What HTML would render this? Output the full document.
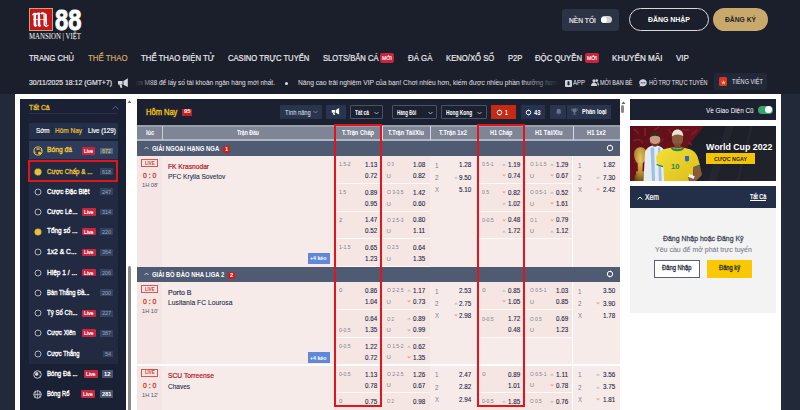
<!DOCTYPE html>
<html><head><meta charset="utf-8"><style>
html,body{margin:0;padding:0;}
body{width:800px;height:410px;overflow:hidden;position:relative;background:#1b1f2b;font-family:"Liberation Sans",sans-serif;}
.b{position:absolute;}
.t{position:absolute;white-space:nowrap;transform-origin:0 0;}

</style></head><body>
<div class="b" style="left:0px;top:0px;width:800px;height:94px;background:#1b1f2b;"></div>
<div class="b" style="left:0px;top:94px;width:800px;height:316px;background:#222939;"></div>
<div class="b" style="left:15px;top:94px;width:766px;height:316px;background:#ffffff;"></div>
<div class="b" style="left:29px;top:8px;width:24px;height:23px;background:#c4161c;border:1px solid #c9a56a;box-sizing:border-box;"></div>
<svg style="position:absolute;left:29px;top:8px" width="24" height="23" viewBox="0 0 24 23"><g fill="#ffffff"><path d="M3.2 6.5c1-1.6 2.4-2.2 3.8-1.6l.2 11.6 1.2 1.6-2.4 1-1.4-1.6V7.2c-.5-.3-1-.2-1.4.4z"/><path d="M7 5.4c1.2-1 2.6-1.2 4-.6l.3 11.8 1 1.4-2.2.9-1.3-1.5V6.6L7 7z"/><path d="M11 5.2c1.4-1.1 3-1.3 4.6-.4l.4 11.6 1.8 1.3 1.6-.9.2 1-2.6 1.4-2.4-1.6-.2-11.6-1.8.6z"/><path d="M15.4 4.8l2.4 1.4.3 10.2-1.5.4z"/><path d="M4 11h13v1H4z" opacity=".6"/></g></svg>
<div class="t" style="left:55.00px;top:5.12px;font-size:29.5px;line-height:29.5px;color:#ffffff;font-weight:700;transform:scaleX(0.807);-webkit-text-stroke:0.9px #fff;">88</div>
<div class="t" style="left:29.00px;top:32.27px;font-size:8.5px;line-height:8.5px;color:#ffffff;font-family:'Liberation Serif',serif;transform:scaleX(0.802);">MANSION | VIỆT</div>
<div class="b" style="left:562px;top:9px;width:56.5px;height:22px;background:#2c3345;border-radius:3px;"></div>
<div class="t" style="left:569.00px;top:16.54px;font-size:7.6px;line-height:7.6px;color:#f2f2f2;transform:scaleX(0.880);-webkit-text-stroke:0.15px #fff;">NỀN TỐI</div>
<div class="b" style="left:600.7px;top:16.3px;width:11.5px;height:6.9px;background:#d2d2d6;border-radius:3.5px;"></div>
<div class="b" style="left:600.9px;top:16.5px;width:6.4px;height:6.5px;background:#ffffff;border-radius:3.3px;"></div>
<div class="b" style="left:628.5px;top:8px;width:80px;height:23px;border:1px solid #d8d8d8;box-sizing:border-box;border-radius:12px;"></div>
<div class="t" style="left:647.90px;top:15.97px;font-size:7.8px;line-height:7.8px;color:#ffffff;font-weight:700;transform:scaleX(0.889);">ĐĂNG NHẬP</div>
<div class="b" style="left:712.5px;top:8px;width:55.5px;height:23px;background:#c9a86c;border-radius:12px;"></div>
<div class="t" style="left:724.50px;top:15.97px;font-size:7.8px;line-height:7.8px;color:#1b1f2b;font-weight:700;transform:scaleX(0.862);">ĐĂNG KÝ</div>
<div class="t" style="left:28.90px;top:53.52px;font-size:8.8px;line-height:8.8px;color:#e9e9ee;transform:scaleX(0.859);-webkit-text-stroke:0.2px currentColor;">TRANG CHỦ</div>
<div class="t" style="left:88.00px;top:53.52px;font-size:8.8px;line-height:8.8px;color:#d6a96c;transform:scaleX(0.891);-webkit-text-stroke:0.2px currentColor;">THỂ THAO</div>
<div class="t" style="left:141.00px;top:53.52px;font-size:8.8px;line-height:8.8px;color:#e9e9ee;transform:scaleX(0.886);-webkit-text-stroke:0.2px currentColor;">THỂ THAO ĐIỆN TỬ</div>
<div class="t" style="left:228.00px;top:53.52px;font-size:8.8px;line-height:8.8px;color:#e9e9ee;transform:scaleX(0.868);-webkit-text-stroke:0.2px currentColor;">CASINO TRỰC TUYẾN</div>
<div class="t" style="left:322.50px;top:53.52px;font-size:8.8px;line-height:8.8px;color:#e9e9ee;transform:scaleX(0.867);-webkit-text-stroke:0.2px currentColor;">SLOTS/BẮN CÁ</div>
<div class="t" style="left:407.50px;top:53.52px;font-size:8.8px;line-height:8.8px;color:#e9e9ee;transform:scaleX(0.895);-webkit-text-stroke:0.2px currentColor;">ĐÁ GÀ</div>
<div class="t" style="left:445.50px;top:53.52px;font-size:8.8px;line-height:8.8px;color:#e9e9ee;transform:scaleX(0.874);-webkit-text-stroke:0.2px currentColor;">KENO/XỔ SỐ</div>
<div class="t" style="left:507.50px;top:53.52px;font-size:8.8px;line-height:8.8px;color:#e9e9ee;transform:scaleX(0.871);-webkit-text-stroke:0.2px currentColor;">P2P</div>
<div class="t" style="left:535.00px;top:53.52px;font-size:8.8px;line-height:8.8px;color:#e9e9ee;transform:scaleX(0.882);-webkit-text-stroke:0.2px currentColor;">ĐỘC QUYỀN</div>
<div class="t" style="left:612.00px;top:53.52px;font-size:8.8px;line-height:8.8px;color:#e9e9ee;transform:scaleX(0.922);-webkit-text-stroke:0.2px currentColor;">KHUYẾN MÃI</div>
<div class="t" style="left:676.00px;top:53.52px;font-size:8.8px;line-height:8.8px;color:#e9e9ee;transform:scaleX(0.916);-webkit-text-stroke:0.2px currentColor;">VIP</div>
<div class="b" style="left:380px;top:53px;width:14.3px;height:10px;background:#c8243c;border-radius:2px;"></div>
<div class="t" style="left:382.25px;top:55.93px;font-size:5.5px;line-height:5.5px;color:#ffffff;transform:scaleX(0.924);-webkit-text-stroke:0.15px #fff;">MỚI</div>
<div class="b" style="left:584.5px;top:53px;width:14.3px;height:10px;background:#c8243c;border-radius:2px;"></div>
<div class="t" style="left:586.75px;top:55.93px;font-size:5.5px;line-height:5.5px;color:#ffffff;transform:scaleX(0.924);-webkit-text-stroke:0.15px #fff;">MỚI</div>
<div class="t" style="left:28.90px;top:79.31px;font-size:7.4px;line-height:7.4px;color:#ececf0;transform:scaleX(0.935);-webkit-text-stroke:0.15px currentColor;">30/11/2025 18:12 (GMT+7)</div>
<svg style="position:absolute;left:117px;top:77px" width="12" height="12" viewBox="0 0 12 12"><path d="M1 4h4.6v3.6H1z" fill="#d4d7de"/><path d="M2.4 7.6h2.2l.7 3.2H3.4z" fill="#d4d7de"/><path d="M6.4 3.9L10.8 1.2v8.8L6.4 7.7z" fill="#d4d7de"/></svg>
<div class="t" style="left:133.70px;top:79.01px;font-size:7.4px;line-height:7.4px;color:#e0e0e6;transform:scaleX(0.880);">iền M88 để lấy số tài khoản ngân hàng mới nhất.</div>
<div class="b" style="left:130px;top:74px;width:26px;height:16px;background:linear-gradient(90deg,#1b1f2b 20%,rgba(27,31,43,0));"></div>
<div class="b" style="left:285px;top:81.5px;width:3px;height:3px;background:#e0e0e6;border-radius:2px;"></div>
<div class="t" style="left:298.00px;top:79.01px;font-size:7.4px;line-height:7.4px;color:#e0e0e6;transform:scaleX(0.902);">Nâng cao trải nghiệm VIP của bạn! Chơi nhiều hơn, kiếm được nhiều phần thưởng hơn và</div>
<div class="b" style="left:520px;top:74px;width:42px;height:16px;background:linear-gradient(90deg,rgba(27,31,43,0),#1b1f2b 95%);"></div>
<div class="b" style="left:562px;top:74px;width:12px;height:16px;background:#1b1f2b;"></div>
<svg style="position:absolute;left:565px;top:79.5px" width="7" height="7" viewBox="0 0 7 7"><rect x="0" y="0" width="7" height="7" rx="1" fill="#cfd2da"/><rect x="2.6" y="1.3" width="1.8" height="3" fill="#1b1f2b"/><path d="M1.8 3.8h3.4L3.5 5.6z" fill="#1b1f2b"/></svg>
<div class="t" style="left:573.20px;top:79.15px;font-size:7px;line-height:7px;color:#e8e8ee;transform:scaleX(0.856);">APP</div>
<svg style="position:absolute;left:591px;top:79px" width="8" height="7" viewBox="0 0 8 7"><circle cx="3" cy="1.8" r="1.6" fill="#cfd2da"/><path d="M0 7c0-2.4 1.2-3.6 3-3.6S6 4.6 6 7z" fill="#cfd2da"/><circle cx="5.8" cy="1.6" r="1.3" fill="#cfd2da"/><path d="M6.2 3.3c1.2.2 1.8 1.3 1.8 3.2H6.8c0-1.3-.3-2.3-.9-2.9z" fill="#cfd2da"/></svg>
<div class="t" style="left:600.40px;top:79.15px;font-size:7px;line-height:7px;color:#e8e8ee;transform:scaleX(0.785);">MỜI BẠN BÈ</div>
<svg style="position:absolute;left:639px;top:79px" width="8" height="8" viewBox="0 0 8 8"><path d="M4 0.3C6.2 0.3 7.8 1.8 7.8 3.8S6.2 7.2 4 7.2c-.6 0-1.1-.1-1.6-.3L.4 7.6l.7-1.6C.5 5.4.2 4.6.2 3.8.2 1.8 1.8.3 4 .3z" fill="#cfd2da"/><circle cx="2.3" cy="3.8" r=".6" fill="#1b1f2b"/><circle cx="4" cy="3.8" r=".6" fill="#1b1f2b"/><circle cx="5.7" cy="3.8" r=".6" fill="#1b1f2b"/></svg>
<div class="t" style="left:648.60px;top:79.15px;font-size:7px;line-height:7px;color:#e8e8ee;transform:scaleX(0.776);">HỖ TRỢ TRỰC TUYẾN</div>
<div class="b" style="left:714px;top:73.3px;width:53px;height:16.5px;background:#232838;border-radius:2px;"></div>
<div class="b" style="left:718.7px;top:77.4px;width:8.5px;height:9px;background:#d9342b;border-radius:1.5px;"></div>
<svg style="position:absolute;left:720.5px;top:79.5px" width="5" height="5" viewBox="0 0 10 10"><path d="M5 0l1.2 3.6H10L6.9 5.8 8.1 9.5 5 7.2 1.9 9.5 3.1 5.8 0 3.6h3.8z" fill="#f7d84a"/></svg>
<div class="t" style="left:731.90px;top:78.35px;font-size:7px;line-height:7px;color:#e8e8ee;transform:scaleX(0.792);">TIẾNG VIỆT</div>
<div class="b" style="left:20px;top:99px;width:106.3px;height:311px;background:#1b2134;"></div>
<div class="t" style="left:29.00px;top:103.60px;font-size:8px;line-height:8px;color:#e2bb32;transform:scaleX(0.862);-webkit-text-stroke:0.35px currentColor;">Tất Cả</div>
<svg style="position:absolute;left:111.5px;top:104.5px" width="7" height="5" viewBox="0 0 7 5"><path d="M.6 4.2L3.5 1.3l2.9 2.9" stroke="#5d6b8a" stroke-width="1" fill="none"/></svg>
<div class="b" style="left:29px;top:113.2px;width:88px;height:1px;background:#2a3349;"></div>
<div class="b" style="left:28.7px;top:123px;width:88.9px;height:15.8px;background:#243049;"></div>
<div class="b" style="left:51.6px;top:126px;width:0.6px;height:10px;background:#1e2740;"></div>
<div class="b" style="left:84.4px;top:126px;width:0.6px;height:10px;background:#1e2740;"></div>
<div class="t" style="left:36.30px;top:126.77px;font-size:7.8px;line-height:7.8px;color:#ffffff;transform:scaleX(0.809);-webkit-text-stroke:0.2px currentColor;">Sớm</div>
<div class="t" style="left:54.80px;top:126.77px;font-size:7.8px;line-height:7.8px;color:#edc232;transform:scaleX(0.831);-webkit-text-stroke:0.2px currentColor;">Hôm Nay</div>
<div class="t" style="left:87.60px;top:126.77px;font-size:7.8px;line-height:7.8px;color:#ffffff;transform:scaleX(0.805);-webkit-text-stroke:0.2px currentColor;">Live (129)</div>
<div class="b" style="left:28.7px;top:141px;width:88.9px;height:223px;background:#222a42;"></div>
<div class="b" style="left:28.7px;top:141px;width:88.9px;height:17.5px;background:#2f3b5a;"></div>
<svg style="position:absolute;left:32.8px;top:146px" width="10" height="10" viewBox="0 0 10 10"><circle cx="5" cy="5" r="4.1" fill="none" stroke="#e8c13a" stroke-width="1"/><path d="M3.8 2.2h2.6l.4 1.6H3.4z" fill="#e8c13a"/><circle cx="6.6" cy="6.9" r="1.5" fill="#e8c13a"/><path d="M1 5.2l1.4.4.2 1.8-1.2-.3z" fill="#e8c13a"/><path d="M7.6 3.2l1.2.2.3 1.8-1.2-.4z" fill="#e8c13a"/></svg>
<div class="t" style="left:46.60px;top:146.47px;font-size:7.8px;line-height:7.8px;color:#e8c13a;transform:scaleX(0.860);-webkit-text-stroke:0.4px currentColor;">Bóng đá</div>
<div class="b" style="left:81.7px;top:147.1px;width:13.5px;height:7.6px;background:#c8253f;border-radius:1px;"></div>
<div class="t" style="left:83.95px;top:147.93px;font-size:6.2px;line-height:6.2px;color:#ffffff;transform:scaleX(0.792);-webkit-text-stroke:0.2px #fff;">Live</div>
<div class="b" style="left:99.89999999999999px;top:147.5px;width:12.7px;height:6.8px;background:#4e6889;border-radius:0.5px;"></div>
<div class="t" style="left:101.67px;top:147.90px;font-size:6px;line-height:6px;color:#e8c13a;transform:scaleX(0.914);">672</div>
<div class="b" style="left:27.7px;top:160px;width:90.1px;height:21.7px;border:2px solid #e3141b;box-sizing:border-box;"></div>
<svg style="position:absolute;left:34px;top:167.6px" width="8" height="8" viewBox="0 0 8 8"><circle cx="4" cy="4" r="3.3" fill="#e8c13a"/><circle cx="4" cy="4" r="3.6" fill="none" stroke="#e8c13a" stroke-width=".6" stroke-dasharray="1 .8"/></svg>
<div class="t" style="left:46.60px;top:167.57px;font-size:7.8px;line-height:7.8px;color:#e8c13a;transform:scaleX(0.801);-webkit-text-stroke:0.35px currentColor;">Cược Chấp &amp; ...</div>
<div class="b" style="left:100.1px;top:168.2px;width:12.7px;height:6.8px;background:#34425f;border-radius:0.5px;"></div>
<div class="t" style="left:101.88px;top:168.60px;font-size:6px;line-height:6px;color:#95a2bb;transform:scaleX(0.914);">618</div>
<svg style="position:absolute;left:34px;top:187.7px" width="8" height="8" viewBox="0 0 8 8"><circle cx="4" cy="4" r="3" fill="none" stroke="#cfd3db" stroke-width=".8"/></svg>
<div class="t" style="left:47.00px;top:187.67px;font-size:7.8px;line-height:7.8px;color:#ffffff;transform:scaleX(0.825);-webkit-text-stroke:0.35px currentColor;">Cược Đặc Biệt</div>
<div class="b" style="left:100.1px;top:188.29999999999998px;width:12.7px;height:6.8px;background:#34425f;border-radius:0.5px;"></div>
<div class="t" style="left:101.88px;top:188.70px;font-size:6px;line-height:6px;color:#95a2bb;transform:scaleX(0.914);">247</div>
<svg style="position:absolute;left:34px;top:208.0px" width="8" height="8" viewBox="0 0 8 8"><circle cx="4" cy="4" r="3" fill="none" stroke="#cfd3db" stroke-width=".8"/></svg>
<div class="t" style="left:47.00px;top:207.97px;font-size:7.8px;line-height:7.8px;color:#ffffff;transform:scaleX(0.820);-webkit-text-stroke:0.35px currentColor;">Cược Lẻ...</div>
<div class="b" style="left:81.5px;top:208.2px;width:14px;height:7.6px;background:#c8253f;border-radius:1px;"></div>
<div class="t" style="left:83.75px;top:209.03px;font-size:6.2px;line-height:6.2px;color:#ffffff;transform:scaleX(0.836);-webkit-text-stroke:0.2px #fff;">Live</div>
<div class="b" style="left:100.1px;top:208.6px;width:12.7px;height:6.8px;background:#34425f;border-radius:0.5px;"></div>
<div class="t" style="left:101.88px;top:209.00px;font-size:6px;line-height:6px;color:#95a2bb;transform:scaleX(0.914);">314</div>
<svg style="position:absolute;left:34px;top:227.5px" width="8" height="8" viewBox="0 0 8 8"><circle cx="4" cy="4" r="3.3" fill="#e8c13a" stroke="#c9a72f" stroke-width=".5"/></svg>
<div class="t" style="left:47.00px;top:227.47px;font-size:7.8px;line-height:7.8px;color:#ffffff;transform:scaleX(0.828);-webkit-text-stroke:0.35px currentColor;">Tổng số ...</div>
<div class="b" style="left:81.5px;top:227.7px;width:14px;height:7.6px;background:#c8253f;border-radius:1px;"></div>
<div class="t" style="left:83.75px;top:228.53px;font-size:6.2px;line-height:6.2px;color:#ffffff;transform:scaleX(0.836);-webkit-text-stroke:0.2px #fff;">Live</div>
<div class="b" style="left:100.1px;top:228.1px;width:12.7px;height:6.8px;background:#34425f;border-radius:0.5px;"></div>
<div class="t" style="left:101.88px;top:228.50px;font-size:6px;line-height:6px;color:#95a2bb;transform:scaleX(0.914);">220</div>
<svg style="position:absolute;left:34px;top:248.3px" width="8" height="8" viewBox="0 0 8 8"><circle cx="4" cy="4" r="3" fill="none" stroke="#cfd3db" stroke-width=".8"/></svg>
<div class="t" style="left:47.00px;top:248.27px;font-size:7.8px;line-height:7.8px;color:#ffffff;transform:scaleX(0.862);-webkit-text-stroke:0.35px currentColor;">1x2 &amp; C...</div>
<div class="b" style="left:81.5px;top:248.5px;width:14px;height:7.6px;background:#c8253f;border-radius:1px;"></div>
<div class="t" style="left:83.75px;top:249.33px;font-size:6.2px;line-height:6.2px;color:#ffffff;transform:scaleX(0.836);-webkit-text-stroke:0.2px #fff;">Live</div>
<div class="b" style="left:100.1px;top:248.9px;width:12.7px;height:6.8px;background:#34425f;border-radius:0.5px;"></div>
<div class="t" style="left:101.88px;top:249.30px;font-size:6px;line-height:6px;color:#95a2bb;transform:scaleX(0.914);">364</div>
<svg style="position:absolute;left:34px;top:268.6px" width="8" height="8" viewBox="0 0 8 8"><circle cx="4" cy="4" r="3" fill="none" stroke="#cfd3db" stroke-width=".8"/></svg>
<div class="t" style="left:47.00px;top:268.57px;font-size:7.8px;line-height:7.8px;color:#ffffff;transform:scaleX(0.844);-webkit-text-stroke:0.35px currentColor;">Hiệp 1 / ...</div>
<div class="b" style="left:81.5px;top:268.8px;width:14px;height:7.6px;background:#c8253f;border-radius:1px;"></div>
<div class="t" style="left:83.75px;top:269.63px;font-size:6.2px;line-height:6.2px;color:#ffffff;transform:scaleX(0.836);-webkit-text-stroke:0.2px #fff;">Live</div>
<div class="b" style="left:100.1px;top:269.20000000000005px;width:12.7px;height:6.8px;background:#34425f;border-radius:0.5px;"></div>
<div class="t" style="left:101.88px;top:269.60px;font-size:6px;line-height:6px;color:#95a2bb;transform:scaleX(0.914);">206</div>
<svg style="position:absolute;left:34px;top:288.8px" width="8" height="8" viewBox="0 0 8 8"><circle cx="4" cy="4" r="3" fill="none" stroke="#cfd3db" stroke-width=".8"/></svg>
<div class="t" style="left:47.00px;top:288.77px;font-size:7.8px;line-height:7.8px;color:#ffffff;transform:scaleX(0.750);-webkit-text-stroke:0.35px currentColor;">Bàn Thắng Đầ...</div>
<div class="b" style="left:100.1px;top:289.40000000000003px;width:12.7px;height:6.8px;background:#34425f;border-radius:0.5px;"></div>
<div class="t" style="left:101.88px;top:289.80px;font-size:6px;line-height:6px;color:#95a2bb;transform:scaleX(0.914);">200</div>
<svg style="position:absolute;left:34px;top:309.3px" width="8" height="8" viewBox="0 0 8 8"><circle cx="4" cy="4" r="3" fill="none" stroke="#cfd3db" stroke-width=".8"/></svg>
<div class="t" style="left:47.00px;top:309.27px;font-size:7.8px;line-height:7.8px;color:#ffffff;transform:scaleX(0.782);-webkit-text-stroke:0.35px currentColor;">Tỷ Số Ch...</div>
<div class="b" style="left:81.5px;top:309.5px;width:14px;height:7.6px;background:#c8253f;border-radius:1px;"></div>
<div class="t" style="left:83.75px;top:310.33px;font-size:6.2px;line-height:6.2px;color:#ffffff;transform:scaleX(0.836);-webkit-text-stroke:0.2px #fff;">Live</div>
<div class="b" style="left:100.1px;top:309.90000000000003px;width:12.7px;height:6.8px;background:#34425f;border-radius:0.5px;"></div>
<div class="t" style="left:101.88px;top:310.30px;font-size:6px;line-height:6px;color:#95a2bb;transform:scaleX(0.914);">227</div>
<svg style="position:absolute;left:34px;top:329.2px" width="8" height="8" viewBox="0 0 8 8"><circle cx="4" cy="4" r="3" fill="none" stroke="#cfd3db" stroke-width=".8"/></svg>
<div class="t" style="left:47.00px;top:329.17px;font-size:7.8px;line-height:7.8px;color:#ffffff;transform:scaleX(0.757);-webkit-text-stroke:0.35px currentColor;">Cược Xiên</div>
<div class="b" style="left:81.5px;top:329.4px;width:14px;height:7.6px;background:#c8253f;border-radius:1px;"></div>
<div class="t" style="left:83.75px;top:330.23px;font-size:6.2px;line-height:6.2px;color:#ffffff;transform:scaleX(0.836);-webkit-text-stroke:0.2px #fff;">Live</div>
<div class="b" style="left:100.1px;top:329.8px;width:12.7px;height:6.8px;background:#34425f;border-radius:0.5px;"></div>
<div class="t" style="left:101.88px;top:330.20px;font-size:6px;line-height:6px;color:#95a2bb;transform:scaleX(0.914);">387</div>
<svg style="position:absolute;left:34px;top:349.9px" width="8" height="8" viewBox="0 0 8 8"><circle cx="4" cy="4" r="3" fill="none" stroke="#cfd3db" stroke-width=".8"/></svg>
<div class="t" style="left:47.00px;top:349.87px;font-size:7.8px;line-height:7.8px;color:#ffffff;transform:scaleX(0.739);-webkit-text-stroke:0.35px currentColor;">Cược Thắng</div>
<div class="b" style="left:103.0px;top:350.5px;width:9.8px;height:6.8px;background:#34425f;border-radius:0.5px;"></div>
<div class="t" style="left:104.85px;top:350.90px;font-size:6px;line-height:6px;color:#95a2bb;transform:scaleX(0.912);">54</div>
<svg style="position:absolute;left:32.7px;top:369.6px" width="9" height="9" viewBox="0 0 10 10"><circle cx="5" cy="5" r="4.2" fill="none" stroke="#cfd3db" stroke-width="1"/><path d="M3 2.2l2.6.6.6 2.4-2 1.6-2-1.2z" fill="#cfd3db"/><path d="M6.8 6.5l2 1M7 3l1.8-.8" stroke="#cfd3db" stroke-width=".8"/></svg>
<div class="t" style="left:47.00px;top:370.07px;font-size:7.8px;line-height:7.8px;color:#ffffff;transform:scaleX(0.782);-webkit-text-stroke:0.35px currentColor;">Bóng Đá ...</div>
<div class="b" style="left:84px;top:370.3px;width:14px;height:7.6px;background:#c8253f;border-radius:1px;"></div>
<div class="t" style="left:86.25px;top:371.13px;font-size:6.2px;line-height:6.2px;color:#ffffff;transform:scaleX(0.836);-webkit-text-stroke:0.2px #fff;">Live</div>
<div class="b" style="left:102.4px;top:370.4px;width:10.5px;height:7.4px;background:#48546e;border-radius:0.5px;"></div>
<div class="t" style="left:104.40px;top:371.03px;font-size:6.2px;line-height:6.2px;color:#ffffff;font-weight:700;transform:scaleX(0.943);">12</div>
<svg style="position:absolute;left:32.7px;top:389.6px" width="9" height="9" viewBox="0 0 10 10"><circle cx="5" cy="5" r="4.2" fill="none" stroke="#cfd3db" stroke-width="1"/><path d="M5 .8v8.4M.8 5h8.4M2.2 2c1.6 1.6 1.6 4.4 0 6M7.8 2c-1.6 1.6-1.6 4.4 0 6" stroke="#cfd3db" stroke-width=".7" fill="none"/></svg>
<div class="t" style="left:47.00px;top:390.07px;font-size:7.8px;line-height:7.8px;color:#ffffff;transform:scaleX(0.742);-webkit-text-stroke:0.35px currentColor;">Bóng Rổ</div>
<div class="b" style="left:81.2px;top:390.3px;width:14.2px;height:7.6px;background:#c8253f;border-radius:1px;"></div>
<div class="t" style="left:83.45px;top:391.13px;font-size:6.2px;line-height:6.2px;color:#ffffff;transform:scaleX(0.854);-webkit-text-stroke:0.2px #fff;">Live</div>
<div class="b" style="left:99.9px;top:390.4px;width:13px;height:7.4px;background:#48546e;border-radius:0.5px;"></div>
<div class="t" style="left:101.65px;top:391.03px;font-size:6.2px;line-height:6.2px;color:#ffffff;font-weight:700;transform:scaleX(0.920);">281</div>
<svg style="position:absolute;left:127px;top:99px" width="5" height="5" viewBox="0 0 5 5"><path d="M.5 4L2.5 1.5 4.5 4z" fill="#666"/></svg>
<div class="b" style="left:128px;top:266px;width:3px;height:150px;background:#8a8a8a;border-radius:1.5px;"></div>
<div class="b" style="left:137px;top:99px;width:482.7px;height:26px;background:#1c2131;"></div>
<div class="t" style="left:146.00px;top:107.14px;font-size:9.6px;line-height:9.6px;color:#f2c41a;transform:scaleX(0.785);-webkit-text-stroke:0.4px currentColor;">Hôm Nay</div>
<div class="b" style="left:182px;top:109px;width:10px;height:6.6px;background:#c8201e;"></div>
<div class="t" style="left:183.75px;top:109.47px;font-size:5.8px;line-height:5.8px;color:#ffffff;font-weight:700;transform:scaleX(1.007);">95</div>
<div class="b" style="left:280px;top:105px;width:42.2px;height:13.6px;background:#29344f;border-radius:1px;"></div>
<div class="t" style="left:285.30px;top:108.51px;font-size:7.4px;line-height:7.4px;color:#c9cfdb;transform:scaleX(0.772);-webkit-text-stroke:0.15px currentColor;">Tính năng</div>
<svg style="position:absolute;left:313px;top:110px" width="5" height="4" viewBox="0 0 5 4"><path d="M.5 1L2.5 3 4.5 1" stroke="#8a94aa" stroke-width=".8" fill="none"/></svg>
<div class="b" style="left:326px;top:105px;width:20px;height:13.6px;background:#29344f;border-radius:1px;"></div>
<svg style="position:absolute;left:330.5px;top:107px" width="9" height="9" viewBox="0 0 12 12"><path d="M1 4h4.6v3.6H1z" fill="#ffffff"/><path d="M2.4 7.6h2.2l.7 3.2H3.4z" fill="#ffffff"/><path d="M6.4 3.9L10.8 1.2v8.8L6.4 7.7z" fill="#ffffff"/></svg>
<div class="b" style="left:350px;top:105px;width:33px;height:13.8px;background:#1c2131;border:0.8px solid #4a5268;box-sizing:border-box;border-radius:1px;"></div>
<div class="t" style="left:355.00px;top:108.74px;font-size:7.6px;line-height:7.6px;color:#ffffff;font-weight:700;transform:scaleX(0.638);">Tất cả</div>
<svg style="position:absolute;left:374px;top:110.5px" width="5" height="4" viewBox="0 0 5 4"><path d="M.5 1L2.5 3 4.5 1" stroke="#d0d4dc" stroke-width=".8" fill="none"/></svg>
<div class="b" style="left:392px;top:105px;width:45px;height:13.8px;background:#1c2131;border:0.8px solid #4a5268;box-sizing:border-box;border-radius:1px;"></div>
<div class="t" style="left:397.10px;top:108.74px;font-size:7.6px;line-height:7.6px;color:#ffffff;font-weight:700;transform:scaleX(0.576);">Hàng Đôi</div>
<svg style="position:absolute;left:428.2px;top:110.5px" width="5" height="4" viewBox="0 0 5 4"><path d="M.5 1L2.5 3 4.5 1" stroke="#d0d4dc" stroke-width=".8" fill="none"/></svg>
<div class="b" style="left:441.3px;top:105px;width:45.5px;height:13.8px;background:#1c2131;border:0.8px solid #4a5268;box-sizing:border-box;border-radius:1px;"></div>
<div class="t" style="left:446.30px;top:108.74px;font-size:7.6px;line-height:7.6px;color:#ffffff;font-weight:700;transform:scaleX(0.640);">Hong Kong</div>
<svg style="position:absolute;left:477px;top:110.5px" width="5" height="4" viewBox="0 0 5 4"><path d="M.5 1L2.5 3 4.5 1" stroke="#d0d4dc" stroke-width=".8" fill="none"/></svg>
<div class="b" style="left:491px;top:105.1px;width:25.1px;height:13.65px;background:#c42a14;border-radius:0.5px;"></div>
<svg style="position:absolute;left:495.6px;top:108.5px" width="7" height="7" viewBox="0 0 8 8"><circle cx="4" cy="4" r="2.6" stroke="#ffffff" stroke-width="1.1" fill="none"/><path d="M4 .3l1.3 1.3L4 2.8zM4 5.2l-1.3 1.2L4 7.7z" fill="#ffffff"/></svg>
<div class="t" style="left:504.90px;top:108.51px;font-size:7.4px;line-height:7.4px;color:#ffffff;font-weight:700;transform:scaleX(0.679);">1</div>
<div class="b" style="left:520.6px;top:105.1px;width:24.8px;height:13.65px;background:#253252;border-radius:0.5px;"></div>
<svg style="position:absolute;left:524.9px;top:108.5px" width="7" height="7" viewBox="0 0 8 8"><circle cx="4" cy="4" r="2.6" stroke="#ffffff" stroke-width="1.1" fill="none"/><path d="M4 .3l1.3 1.3L4 2.8zM4 5.2l-1.3 1.2L4 7.7z" fill="#ffffff"/></svg>
<div class="t" style="left:533.90px;top:108.51px;font-size:7.4px;line-height:7.4px;color:#ffffff;font-weight:700;transform:scaleX(0.802);">43</div>
<div class="b" style="left:550px;top:105px;width:60.8px;height:13.8px;background:#29344f;border-radius:1px;"></div>
<div class="b" style="left:566px;top:105px;width:0.7px;height:13.8px;background:#1c2131;"></div>
<svg style="position:absolute;left:555.5px;top:107.5px" width="5.5" height="7" viewBox="0 0 6 7"><path d="M3 .5c1.4 0 2.2 1 2.2 2.4v1.7L6 5.6H0l.8-1V2.9C.8 1.5 1.6.5 3 .5z" fill="#6b7488"/><circle cx="3" cy="6.3" r=".7" fill="#6b7488"/></svg>
<svg style="position:absolute;left:571px;top:107.5px" width="7" height="7" viewBox="0 0 7 7"><path d="M1.5.5h4v2.2c0 1.2-.9 2-2 2s-2-.8-2-2z" fill="#6b7488"/><path d="M1.5 1H.4v.8c0 .8.5 1.2 1.1 1.2M5.5 1h1.1v.8c0 .8-.5 1.2-1.1 1.2" stroke="#6b7488" stroke-width=".6" fill="none"/><path d="M3 4.5h1v1.3h1.2v.8H1.8v-.8H3z" fill="#6b7488"/></svg>
<div class="t" style="left:581.80px;top:108.35px;font-size:7px;line-height:7px;color:#ffffff;font-weight:700;transform:scaleX(0.787);">Phân loại</div>
<svg style="position:absolute;left:620.5px;top:99.5px" width="5" height="5" viewBox="0 0 5 5"><path d="M.5 4L2.5 1.5 4.5 4z" fill="#666"/></svg>
<div class="b" style="left:621px;top:105.2px;width:3px;height:8px;background:#8a8a8a;border-radius:1.5px;"></div>
<div class="b" style="left:137px;top:125px;width:482.7px;height:14px;background:#7e8597;"></div>
<div class="b" style="left:137px;top:125px;width:482.7px;height:1.6px;background:#999ea9;"></div>
<div class="b" style="left:137px;top:139px;width:482.7px;height:2px;background:#b2b6c0;"></div>
<div class="b" style="left:162px;top:126px;width:0.8px;height:14px;background:#c9ccd3;"></div>
<div class="t" style="left:145.75px;top:128.75px;font-size:7px;line-height:7px;color:#ffffff;font-weight:700;transform:scaleX(0.820);">lúc</div>
<div class="t" style="left:237.00px;top:128.75px;font-size:7px;line-height:7px;color:#ffffff;font-weight:700;transform:scaleX(0.734);">Trận Đấu</div>
<div class="t" style="left:342.00px;top:128.88px;font-size:7.2px;line-height:7.2px;color:#ffffff;font-weight:700;transform:scaleX(0.786);">T.Trận Chấp</div>
<div class="t" style="left:388.00px;top:128.88px;font-size:7.2px;line-height:7.2px;color:#ffffff;font-weight:700;transform:scaleX(0.777);">T.Trận Tài/Xỉu</div>
<div class="t" style="left:439.40px;top:128.88px;font-size:7.2px;line-height:7.2px;color:#ffffff;font-weight:700;transform:scaleX(0.805);">T.Trận 1x2</div>
<div class="t" style="left:490.00px;top:128.88px;font-size:7.2px;line-height:7.2px;color:#ffffff;font-weight:700;transform:scaleX(0.768);">H1 Chấp</div>
<div class="t" style="left:535.00px;top:128.88px;font-size:7.2px;line-height:7.2px;color:#ffffff;font-weight:700;transform:scaleX(0.788);">H1 Tài/Xỉu</div>
<div class="t" style="left:587.00px;top:128.88px;font-size:7.2px;line-height:7.2px;color:#ffffff;font-weight:700;transform:scaleX(0.802);">H1 1x2</div>
<div class="b" style="left:381.5px;top:126px;width:0.8px;height:14px;background:#d5d8de;"></div>
<div class="b" style="left:429.6px;top:126px;width:0.8px;height:14px;background:#d5d8de;"></div>
<div class="b" style="left:572.6px;top:126px;width:0.8px;height:14px;background:#d5d8de;"></div>
<div class="b" style="left:137px;top:141px;width:482.7px;height:15px;background:#4f5a73;"></div>
<svg style="position:absolute;left:143.5px;top:146px" width="5" height="4" viewBox="0 0 5 4"><path d="M.5 3L2.5 1 4.5 3" stroke="#e8eaf0" stroke-width=".8" fill="none"/></svg>
<div class="t" style="left:151.60px;top:144.74px;font-size:7.6px;line-height:7.6px;color:#ffffff;font-weight:700;transform:scaleX(0.781);">GIẢI NGOẠI HẠNG NGA</div>
<div class="b" style="left:223.2px;top:145.5px;width:7.0px;height:7px;background:#c8201e;"></div>
<svg style="position:absolute;left:605.6px;top:144.3px" width="8" height="8" viewBox="0 0 8 8"><circle cx="4" cy="4" r="2.7" stroke="#ffffff" stroke-width="1" fill="none"/><path d="M4 .2l1.4 1.3L4 2.6zM4 5.4l-1.4 1.2L4 7.8z" fill="#ffffff"/></svg>
<div class="t" style="left:225.10px;top:146.20px;font-size:6px;line-height:6px;color:#ffffff;font-weight:700;transform:scaleX(0.957);">1</div>
<div class="b" style="left:137px;top:156px;width:482.7px;height:111px;background:#f7ebea;"></div>
<div class="b" style="left:137px;top:156px;width:25px;height:111px;background:#f5e5e4;"></div>
<div class="b" style="left:162px;top:156px;width:0.8px;height:111px;background:#f2eceb;"></div>
<div class="b" style="left:334px;top:156px;width:47.5px;height:28px;background:#f5e6e4;"></div>
<div class="b" style="left:334px;top:183px;width:47.5px;height:1px;background:#fdf9f8;"></div>
<div class="b" style="left:381.5px;top:156px;width:48.10000000000002px;height:28px;background:#f5e6e4;"></div>
<div class="b" style="left:381.5px;top:183px;width:48.10000000000002px;height:1px;background:#fdf9f8;"></div>
<div class="b" style="left:477.3px;top:156px;width:47.49999999999994px;height:28px;background:#f5e6e4;"></div>
<div class="b" style="left:477.3px;top:183px;width:47.49999999999994px;height:1px;background:#fdf9f8;"></div>
<div class="b" style="left:524.8px;top:156px;width:47.80000000000007px;height:28px;background:#f5e6e4;"></div>
<div class="b" style="left:524.8px;top:183px;width:47.80000000000007px;height:1px;background:#fdf9f8;"></div>
<div class="b" style="left:334px;top:184px;width:47.5px;height:27.5px;background:#f5e6e4;"></div>
<div class="b" style="left:334px;top:210.5px;width:47.5px;height:1px;background:#fdf9f8;"></div>
<div class="b" style="left:381.5px;top:184px;width:48.10000000000002px;height:27.5px;background:#f5e6e4;"></div>
<div class="b" style="left:381.5px;top:210.5px;width:48.10000000000002px;height:1px;background:#fdf9f8;"></div>
<div class="b" style="left:477.3px;top:184px;width:47.49999999999994px;height:27.5px;background:#f5e6e4;"></div>
<div class="b" style="left:477.3px;top:210.5px;width:47.49999999999994px;height:1px;background:#fdf9f8;"></div>
<div class="b" style="left:524.8px;top:184px;width:47.80000000000007px;height:27.5px;background:#f5e6e4;"></div>
<div class="b" style="left:524.8px;top:210.5px;width:47.80000000000007px;height:1px;background:#fdf9f8;"></div>
<div class="b" style="left:334px;top:211.5px;width:47.5px;height:27.5px;background:#f5e6e4;"></div>
<div class="b" style="left:334px;top:238.0px;width:47.5px;height:1px;background:#fdf9f8;"></div>
<div class="b" style="left:381.5px;top:211.5px;width:48.10000000000002px;height:27.5px;background:#f5e6e4;"></div>
<div class="b" style="left:381.5px;top:238.0px;width:48.10000000000002px;height:1px;background:#fdf9f8;"></div>
<div class="b" style="left:477.3px;top:211.5px;width:47.49999999999994px;height:27.5px;background:#f5e6e4;"></div>
<div class="b" style="left:477.3px;top:238.0px;width:47.49999999999994px;height:1px;background:#fdf9f8;"></div>
<div class="b" style="left:524.8px;top:211.5px;width:47.80000000000007px;height:27.5px;background:#f5e6e4;"></div>
<div class="b" style="left:524.8px;top:238.0px;width:47.80000000000007px;height:1px;background:#fdf9f8;"></div>
<div class="b" style="left:334px;top:239px;width:47.5px;height:28px;background:#f5e6e4;"></div>
<div class="b" style="left:334px;top:266px;width:47.5px;height:1px;background:#fdf9f8;"></div>
<div class="b" style="left:381.5px;top:239px;width:48.10000000000002px;height:28px;background:#f5e6e4;"></div>
<div class="b" style="left:381.5px;top:266px;width:48.10000000000002px;height:1px;background:#fdf9f8;"></div>
<div class="t" style="left:167.80px;top:162.76px;font-size:7.7px;line-height:7.7px;color:#b3101a;transform:scaleX(0.866);-webkit-text-stroke:0.2px currentColor;">FK Krasnodar</div>
<div class="t" style="left:167.80px;top:172.96px;font-size:7.7px;line-height:7.7px;color:#232c46;transform:scaleX(0.860);-webkit-text-stroke:0.1px currentColor;">PFC Krylia Sovetov</div>
<div class="b" style="left:141.2px;top:158.8px;width:16.8px;height:8.5px;border:0.9px solid #d45a4c;box-sizing:border-box;"></div>
<div class="t" style="left:144.85px;top:160.74px;font-size:5.6px;line-height:5.6px;color:#c9432f;font-weight:700;transform:scaleX(0.764);">LIVE</div>
<div class="t" style="left:142.95px;top:171.80px;font-size:8px;line-height:8px;color:#c9482e;transform:scaleX(0.854);-webkit-text-stroke:0.35px #c9482e;">0 : 0</div>
<div class="t" style="left:141.80px;top:183.27px;font-size:5.8px;line-height:5.8px;color:#4e5566;transform:scaleX(0.977);">1H 08&#x27;</div>
<div class="b" style="left:307.8px;top:252.5px;width:21.8px;height:11px;background:#5f88d9;"></div>
<div class="t" style="left:310.45px;top:255.23px;font-size:6.2px;line-height:6.2px;color:#ffffff;font-weight:700;transform:scaleX(0.849);">+4 kèo</div>
<div class="t" style="left:339.00px;top:161.30px;font-size:6px;line-height:6px;color:#7c818c;transform:scaleX(0.858);">1.5-2</div>
<div class="t" style="left:365.00px;top:160.79px;font-size:7.3px;line-height:7.3px;color:#1e2944;transform:scaleX(0.859);-webkit-text-stroke:0.12px #1e2944;">1.13</div>
<div class="t" style="left:365.00px;top:171.99px;font-size:7.3px;line-height:7.3px;color:#1e2944;transform:scaleX(0.859);-webkit-text-stroke:0.12px #1e2944;">0.72</div>
<div class="t" style="left:386.50px;top:161.30px;font-size:6px;line-height:6px;color:#7c818c;transform:scaleX(0.729);">O 3</div>
<div class="t" style="left:413.10px;top:160.79px;font-size:7.3px;line-height:7.3px;color:#1e2944;transform:scaleX(0.859);-webkit-text-stroke:0.12px #1e2944;">1.08</div>
<div class="t" style="left:386.50px;top:172.50px;font-size:6px;line-height:6px;color:#7c818c;">U</div>
<div class="t" style="left:413.10px;top:171.99px;font-size:7.3px;line-height:7.3px;color:#1e2944;transform:scaleX(0.859);-webkit-text-stroke:0.12px #1e2944;">0.82</div>
<div class="t" style="left:482.30px;top:161.30px;font-size:6px;line-height:6px;color:#7c818c;transform:scaleX(0.858);">0.5-1</div>
<div class="t" style="left:508.30px;top:160.79px;font-size:7.3px;line-height:7.3px;color:#1e2944;transform:scaleX(0.859);-webkit-text-stroke:0.12px #1e2944;">1.19</div>
<svg style="position:absolute;left:501.79999999999995px;top:163.0px" width="4" height="3" viewBox="0 0 4 3"><path d="M0 2.6L2 .6 4 2.6z" fill="#b9c2c4"/></svg>
<div class="t" style="left:508.30px;top:171.99px;font-size:7.3px;line-height:7.3px;color:#1e2944;transform:scaleX(0.859);-webkit-text-stroke:0.12px #1e2944;">0.74</div>
<svg style="position:absolute;left:501.79999999999995px;top:174.2px" width="4" height="3" viewBox="0 0 4 3"><path d="M0 .4L2 2.4 4 .4z" fill="#e6a394"/></svg>
<div class="t" style="left:529.80px;top:161.30px;font-size:6px;line-height:6px;color:#7c818c;transform:scaleX(0.822);">O 1-1.5</div>
<div class="t" style="left:556.10px;top:160.79px;font-size:7.3px;line-height:7.3px;color:#1e2944;transform:scaleX(0.859);-webkit-text-stroke:0.12px #1e2944;">1.29</div>
<svg style="position:absolute;left:549.6px;top:163.0px" width="4" height="3" viewBox="0 0 4 3"><path d="M0 2.6L2 .6 4 2.6z" fill="#b9c2c4"/></svg>
<div class="t" style="left:529.80px;top:172.50px;font-size:6px;line-height:6px;color:#7c818c;">U</div>
<div class="t" style="left:556.10px;top:171.99px;font-size:7.3px;line-height:7.3px;color:#1e2944;transform:scaleX(0.859);-webkit-text-stroke:0.12px #1e2944;">0.67</div>
<svg style="position:absolute;left:549.6px;top:174.2px" width="4" height="3" viewBox="0 0 4 3"><path d="M0 .4L2 2.4 4 .4z" fill="#e6a394"/></svg>
<div class="t" style="left:339.00px;top:189.30px;font-size:6px;line-height:6px;color:#7c818c;transform:scaleX(0.845);">1.5</div>
<div class="t" style="left:365.00px;top:188.79px;font-size:7.3px;line-height:7.3px;color:#1e2944;transform:scaleX(0.859);-webkit-text-stroke:0.12px #1e2944;">0.89</div>
<div class="t" style="left:365.00px;top:199.99px;font-size:7.3px;line-height:7.3px;color:#1e2944;transform:scaleX(0.859);-webkit-text-stroke:0.12px #1e2944;">0.95</div>
<div class="t" style="left:386.50px;top:189.30px;font-size:6px;line-height:6px;color:#7c818c;transform:scaleX(0.822);">O 3-3.5</div>
<div class="t" style="left:413.10px;top:188.79px;font-size:7.3px;line-height:7.3px;color:#1e2944;transform:scaleX(0.859);-webkit-text-stroke:0.12px #1e2944;">1.42</div>
<div class="t" style="left:386.50px;top:200.50px;font-size:6px;line-height:6px;color:#7c818c;">U</div>
<div class="t" style="left:413.10px;top:199.99px;font-size:7.3px;line-height:7.3px;color:#1e2944;transform:scaleX(0.859);-webkit-text-stroke:0.12px #1e2944;">0.60</div>
<div class="t" style="left:482.30px;top:189.30px;font-size:6px;line-height:6px;color:#7c818c;transform:scaleX(0.845);">0.5</div>
<div class="t" style="left:508.30px;top:188.79px;font-size:7.3px;line-height:7.3px;color:#1e2944;transform:scaleX(0.859);-webkit-text-stroke:0.12px #1e2944;">0.82</div>
<svg style="position:absolute;left:501.79999999999995px;top:191.0px" width="4" height="3" viewBox="0 0 4 3"><path d="M0 .4L2 2.4 4 .4z" fill="#e6a394"/></svg>
<div class="t" style="left:508.30px;top:199.99px;font-size:7.3px;line-height:7.3px;color:#1e2944;transform:scaleX(0.859);-webkit-text-stroke:0.12px #1e2944;">1.02</div>
<svg style="position:absolute;left:501.79999999999995px;top:202.2px" width="4" height="3" viewBox="0 0 4 3"><path d="M0 2.6L2 .6 4 2.6z" fill="#b9c2c4"/></svg>
<div class="t" style="left:529.80px;top:189.30px;font-size:6px;line-height:6px;color:#7c818c;transform:scaleX(0.822);">O 0.5-1</div>
<div class="t" style="left:556.10px;top:188.79px;font-size:7.3px;line-height:7.3px;color:#1e2944;transform:scaleX(0.859);-webkit-text-stroke:0.12px #1e2944;">0.52</div>
<svg style="position:absolute;left:549.6px;top:191.0px" width="4" height="3" viewBox="0 0 4 3"><path d="M0 2.6L2 .6 4 2.6z" fill="#b9c2c4"/></svg>
<div class="t" style="left:529.80px;top:200.50px;font-size:6px;line-height:6px;color:#7c818c;">U</div>
<div class="t" style="left:556.10px;top:199.99px;font-size:7.3px;line-height:7.3px;color:#1e2944;transform:scaleX(0.859);-webkit-text-stroke:0.12px #1e2944;">1.61</div>
<svg style="position:absolute;left:549.6px;top:202.2px" width="4" height="3" viewBox="0 0 4 3"><path d="M0 .4L2 2.4 4 .4z" fill="#e6a394"/></svg>
<div class="t" style="left:339.00px;top:216.80px;font-size:6px;line-height:6px;color:#7c818c;">2</div>
<div class="t" style="left:365.00px;top:216.29px;font-size:7.3px;line-height:7.3px;color:#1e2944;transform:scaleX(0.859);-webkit-text-stroke:0.12px #1e2944;">1.47</div>
<div class="t" style="left:365.00px;top:227.49px;font-size:7.3px;line-height:7.3px;color:#1e2944;transform:scaleX(0.859);-webkit-text-stroke:0.12px #1e2944;">0.52</div>
<div class="t" style="left:386.50px;top:216.80px;font-size:6px;line-height:6px;color:#7c818c;transform:scaleX(0.822);">O 2.5-3</div>
<div class="t" style="left:413.10px;top:216.29px;font-size:7.3px;line-height:7.3px;color:#1e2944;transform:scaleX(0.859);-webkit-text-stroke:0.12px #1e2944;">0.80</div>
<div class="t" style="left:386.50px;top:228.00px;font-size:6px;line-height:6px;color:#7c818c;">U</div>
<div class="t" style="left:413.10px;top:227.49px;font-size:7.3px;line-height:7.3px;color:#1e2944;transform:scaleX(0.892);-webkit-text-stroke:0.12px #1e2944;">1.11</div>
<div class="t" style="left:482.30px;top:216.80px;font-size:6px;line-height:6px;color:#7c818c;transform:scaleX(0.858);">0-0.5</div>
<div class="t" style="left:508.30px;top:216.29px;font-size:7.3px;line-height:7.3px;color:#1e2944;transform:scaleX(0.859);-webkit-text-stroke:0.12px #1e2944;">0.48</div>
<svg style="position:absolute;left:501.79999999999995px;top:218.5px" width="4" height="3" viewBox="0 0 4 3"><path d="M0 .4L2 2.4 4 .4z" fill="#e6a394"/></svg>
<div class="t" style="left:508.30px;top:227.49px;font-size:7.3px;line-height:7.3px;color:#1e2944;transform:scaleX(0.859);-webkit-text-stroke:0.12px #1e2944;">1.72</div>
<svg style="position:absolute;left:501.79999999999995px;top:229.7px" width="4" height="3" viewBox="0 0 4 3"><path d="M0 2.6L2 .6 4 2.6z" fill="#b9c2c4"/></svg>
<div class="t" style="left:529.80px;top:216.80px;font-size:6px;line-height:6px;color:#7c818c;transform:scaleX(0.729);">O 1</div>
<div class="t" style="left:556.10px;top:216.29px;font-size:7.3px;line-height:7.3px;color:#1e2944;transform:scaleX(0.859);-webkit-text-stroke:0.12px #1e2944;">0.79</div>
<svg style="position:absolute;left:549.6px;top:218.5px" width="4" height="3" viewBox="0 0 4 3"><path d="M0 .4L2 2.4 4 .4z" fill="#e6a394"/></svg>
<div class="t" style="left:529.80px;top:228.00px;font-size:6px;line-height:6px;color:#7c818c;">U</div>
<div class="t" style="left:556.10px;top:227.49px;font-size:7.3px;line-height:7.3px;color:#1e2944;transform:scaleX(0.859);-webkit-text-stroke:0.12px #1e2944;">1.12</div>
<svg style="position:absolute;left:549.6px;top:229.7px" width="4" height="3" viewBox="0 0 4 3"><path d="M0 2.6L2 .6 4 2.6z" fill="#b9c2c4"/></svg>
<div class="t" style="left:339.00px;top:244.30px;font-size:6px;line-height:6px;color:#7c818c;transform:scaleX(0.858);">1-1.5</div>
<div class="t" style="left:365.00px;top:243.79px;font-size:7.3px;line-height:7.3px;color:#1e2944;transform:scaleX(0.859);-webkit-text-stroke:0.12px #1e2944;">0.65</div>
<div class="t" style="left:365.00px;top:254.99px;font-size:7.3px;line-height:7.3px;color:#1e2944;transform:scaleX(0.859);-webkit-text-stroke:0.12px #1e2944;">1.23</div>
<div class="t" style="left:386.50px;top:244.30px;font-size:6px;line-height:6px;color:#7c818c;transform:scaleX(0.800);">O 2.5</div>
<div class="t" style="left:413.10px;top:243.79px;font-size:7.3px;line-height:7.3px;color:#1e2944;transform:scaleX(0.859);-webkit-text-stroke:0.12px #1e2944;">0.64</div>
<div class="t" style="left:386.50px;top:255.50px;font-size:6px;line-height:6px;color:#7c818c;">U</div>
<div class="t" style="left:413.10px;top:254.99px;font-size:7.3px;line-height:7.3px;color:#1e2944;transform:scaleX(0.859);-webkit-text-stroke:0.12px #1e2944;">1.35</div>
<div class="t" style="left:434.60px;top:161.55px;font-size:7px;line-height:7px;color:#7a808c;transform:scaleX(0.896);">1</div>
<div class="t" style="left:458.90px;top:161.29px;font-size:7.3px;line-height:7.3px;color:#1e2944;transform:scaleX(0.859);-webkit-text-stroke:0.12px #1e2944;">1.28</div>
<div class="t" style="left:434.60px;top:173.90px;font-size:7px;line-height:7px;color:#7a808c;transform:scaleX(0.896);">2</div>
<div class="t" style="left:458.90px;top:173.64px;font-size:7.3px;line-height:7.3px;color:#1e2944;transform:scaleX(0.859);-webkit-text-stroke:0.12px #1e2944;">9.50</div>
<svg style="position:absolute;left:454.3px;top:175.85px" width="4" height="3" viewBox="0 0 4 3"><path d="M0 2.6L2 .6 4 2.6z" fill="#b9c2c4"/></svg>
<div class="t" style="left:434.60px;top:186.25px;font-size:7px;line-height:7px;color:#7a808c;transform:scaleX(0.856);">X</div>
<div class="t" style="left:458.90px;top:185.99px;font-size:7.3px;line-height:7.3px;color:#1e2944;transform:scaleX(0.859);-webkit-text-stroke:0.12px #1e2944;">5.10</div>
<div class="t" style="left:577.60px;top:161.55px;font-size:7px;line-height:7px;color:#7a808c;transform:scaleX(0.896);">1</div>
<div class="t" style="left:602.70px;top:161.29px;font-size:7.3px;line-height:7.3px;color:#1e2944;transform:scaleX(0.859);-webkit-text-stroke:0.12px #1e2944;">1.82</div>
<div class="t" style="left:577.60px;top:173.90px;font-size:7px;line-height:7px;color:#7a808c;transform:scaleX(0.896);">2</div>
<div class="t" style="left:602.70px;top:173.64px;font-size:7.3px;line-height:7.3px;color:#1e2944;transform:scaleX(0.859);-webkit-text-stroke:0.12px #1e2944;">7.30</div>
<svg style="position:absolute;left:596.2px;top:175.85px" width="4" height="3" viewBox="0 0 4 3"><path d="M0 2.6L2 .6 4 2.6z" fill="#b9c2c4"/></svg>
<div class="t" style="left:577.60px;top:186.25px;font-size:7px;line-height:7px;color:#7a808c;transform:scaleX(0.856);">X</div>
<div class="t" style="left:602.70px;top:185.99px;font-size:7.3px;line-height:7.3px;color:#1e2944;transform:scaleX(0.859);-webkit-text-stroke:0.12px #1e2944;">2.42</div>
<svg style="position:absolute;left:596.2px;top:188.2px" width="4" height="3" viewBox="0 0 4 3"><path d="M0 .4L2 2.4 4 .4z" fill="#e6a394"/></svg>
<div class="b" style="left:137px;top:267px;width:482.7px;height:15px;background:#4f5a73;"></div>
<svg style="position:absolute;left:143.5px;top:272px" width="5" height="4" viewBox="0 0 5 4"><path d="M.5 3L2.5 1 4.5 3" stroke="#e8eaf0" stroke-width=".8" fill="none"/></svg>
<div class="t" style="left:151.60px;top:270.74px;font-size:7.6px;line-height:7.6px;color:#ffffff;font-weight:700;transform:scaleX(0.780);">GIẢI BỒ ĐÀO NHA LIGA 2</div>
<div class="b" style="left:227.8px;top:271.5px;width:6.799999999999983px;height:7px;background:#c8201e;"></div>
<svg style="position:absolute;left:605.6px;top:270.3px" width="8" height="8" viewBox="0 0 8 8"><circle cx="4" cy="4" r="2.7" stroke="#ffffff" stroke-width="1" fill="none"/><path d="M4 .2l1.4 1.3L4 2.6zM4 5.4l-1.4 1.2L4 7.8z" fill="#ffffff"/></svg>
<div class="t" style="left:229.60px;top:272.20px;font-size:6px;line-height:6px;color:#ffffff;font-weight:700;transform:scaleX(0.957);">2</div>
<div class="b" style="left:137px;top:282px;width:482.7px;height:82.4px;background:#f7ebea;"></div>
<div class="b" style="left:137px;top:282px;width:25px;height:82.4px;background:#f5e5e4;"></div>
<div class="b" style="left:162px;top:282px;width:0.8px;height:82.4px;background:#f2eceb;"></div>
<div class="b" style="left:334px;top:282px;width:47.5px;height:28.3px;background:#f5e6e4;"></div>
<div class="b" style="left:334px;top:309.3px;width:47.5px;height:1px;background:#fdf9f8;"></div>
<div class="b" style="left:381.5px;top:282px;width:48.10000000000002px;height:28.3px;background:#f5e6e4;"></div>
<div class="b" style="left:381.5px;top:309.3px;width:48.10000000000002px;height:1px;background:#fdf9f8;"></div>
<div class="b" style="left:477.3px;top:282px;width:47.49999999999994px;height:28.3px;background:#f5e6e4;"></div>
<div class="b" style="left:477.3px;top:309.3px;width:47.49999999999994px;height:1px;background:#fdf9f8;"></div>
<div class="b" style="left:524.8px;top:282px;width:47.80000000000007px;height:28.3px;background:#f5e6e4;"></div>
<div class="b" style="left:524.8px;top:309.3px;width:47.80000000000007px;height:1px;background:#fdf9f8;"></div>
<div class="b" style="left:334px;top:310.3px;width:47.5px;height:27.5px;background:#f5e6e4;"></div>
<div class="b" style="left:334px;top:336.8px;width:47.5px;height:1px;background:#fdf9f8;"></div>
<div class="b" style="left:381.5px;top:310.3px;width:48.10000000000002px;height:27.5px;background:#f5e6e4;"></div>
<div class="b" style="left:381.5px;top:336.8px;width:48.10000000000002px;height:1px;background:#fdf9f8;"></div>
<div class="b" style="left:477.3px;top:310.3px;width:47.49999999999994px;height:27.5px;background:#f5e6e4;"></div>
<div class="b" style="left:477.3px;top:336.8px;width:47.49999999999994px;height:1px;background:#fdf9f8;"></div>
<div class="b" style="left:524.8px;top:310.3px;width:47.80000000000007px;height:27.5px;background:#f5e6e4;"></div>
<div class="b" style="left:524.8px;top:336.8px;width:47.80000000000007px;height:1px;background:#fdf9f8;"></div>
<div class="b" style="left:334px;top:337.8px;width:47.5px;height:27.5px;background:#f5e6e4;"></div>
<div class="b" style="left:334px;top:364.3px;width:47.5px;height:1px;background:#fdf9f8;"></div>
<div class="b" style="left:381.5px;top:337.8px;width:48.10000000000002px;height:27.5px;background:#f5e6e4;"></div>
<div class="b" style="left:381.5px;top:364.3px;width:48.10000000000002px;height:1px;background:#fdf9f8;"></div>
<div class="t" style="left:167.80px;top:288.75px;font-size:7.7px;line-height:7.7px;color:#27304a;transform:scaleX(0.917);-webkit-text-stroke:0.2px currentColor;">Porto B</div>
<div class="t" style="left:167.80px;top:298.95px;font-size:7.7px;line-height:7.7px;color:#232c46;transform:scaleX(0.883);-webkit-text-stroke:0.1px currentColor;">Lusitania FC Lourosa</div>
<div class="b" style="left:141.2px;top:284.8px;width:16.8px;height:8.5px;border:0.9px solid #d45a4c;box-sizing:border-box;"></div>
<div class="t" style="left:144.85px;top:286.74px;font-size:5.6px;line-height:5.6px;color:#c9432f;font-weight:700;transform:scaleX(0.764);">LIVE</div>
<div class="t" style="left:142.95px;top:297.80px;font-size:8px;line-height:8px;color:#c9482e;transform:scaleX(0.854);-webkit-text-stroke:0.35px #c9482e;">0 : 0</div>
<div class="t" style="left:141.80px;top:309.27px;font-size:5.8px;line-height:5.8px;color:#4e5566;transform:scaleX(0.977);">1H 10&#x27;</div>
<div class="b" style="left:307.8px;top:352.2px;width:21.8px;height:11px;background:#5f88d9;"></div>
<div class="t" style="left:310.45px;top:354.93px;font-size:6.2px;line-height:6.2px;color:#ffffff;font-weight:700;transform:scaleX(0.849);">+4 kèo</div>
<div class="t" style="left:339.00px;top:287.30px;font-size:6px;line-height:6px;color:#7c818c;">0</div>
<div class="t" style="left:365.00px;top:286.80px;font-size:7.3px;line-height:7.3px;color:#1e2944;transform:scaleX(0.859);-webkit-text-stroke:0.12px #1e2944;">0.86</div>
<div class="t" style="left:365.00px;top:298.00px;font-size:7.3px;line-height:7.3px;color:#1e2944;transform:scaleX(0.859);-webkit-text-stroke:0.12px #1e2944;">1.04</div>
<div class="t" style="left:386.50px;top:287.30px;font-size:6px;line-height:6px;color:#7c818c;transform:scaleX(0.822);">O 2-2.5</div>
<div class="t" style="left:413.10px;top:286.80px;font-size:7.3px;line-height:7.3px;color:#1e2944;transform:scaleX(0.859);-webkit-text-stroke:0.12px #1e2944;">1.17</div>
<svg style="position:absolute;left:406.6px;top:289.0px" width="4" height="3" viewBox="0 0 4 3"><path d="M0 2.6L2 .6 4 2.6z" fill="#b9c2c4"/></svg>
<div class="t" style="left:386.50px;top:298.50px;font-size:6px;line-height:6px;color:#7c818c;">U</div>
<div class="t" style="left:413.10px;top:298.00px;font-size:7.3px;line-height:7.3px;color:#1e2944;transform:scaleX(0.859);-webkit-text-stroke:0.12px #1e2944;">0.73</div>
<svg style="position:absolute;left:406.6px;top:300.2px" width="4" height="3" viewBox="0 0 4 3"><path d="M0 .4L2 2.4 4 .4z" fill="#e6a394"/></svg>
<div class="t" style="left:482.30px;top:287.30px;font-size:6px;line-height:6px;color:#7c818c;">0</div>
<div class="t" style="left:508.30px;top:286.80px;font-size:7.3px;line-height:7.3px;color:#1e2944;transform:scaleX(0.859);-webkit-text-stroke:0.12px #1e2944;">0.85</div>
<svg style="position:absolute;left:501.79999999999995px;top:289.0px" width="4" height="3" viewBox="0 0 4 3"><path d="M0 2.6L2 .6 4 2.6z" fill="#b9c2c4"/></svg>
<div class="t" style="left:508.30px;top:298.00px;font-size:7.3px;line-height:7.3px;color:#1e2944;transform:scaleX(0.859);-webkit-text-stroke:0.12px #1e2944;">1.05</div>
<svg style="position:absolute;left:501.79999999999995px;top:300.2px" width="4" height="3" viewBox="0 0 4 3"><path d="M0 .4L2 2.4 4 .4z" fill="#e6a394"/></svg>
<div class="t" style="left:529.80px;top:287.30px;font-size:6px;line-height:6px;color:#7c818c;transform:scaleX(0.822);">O 0.5-1</div>
<div class="t" style="left:556.10px;top:286.80px;font-size:7.3px;line-height:7.3px;color:#1e2944;transform:scaleX(0.859);-webkit-text-stroke:0.12px #1e2944;">1.03</div>
<div class="t" style="left:529.80px;top:298.50px;font-size:6px;line-height:6px;color:#7c818c;">U</div>
<div class="t" style="left:556.10px;top:298.00px;font-size:7.3px;line-height:7.3px;color:#1e2944;transform:scaleX(0.859);-webkit-text-stroke:0.12px #1e2944;">0.85</div>
<div class="t" style="left:365.00px;top:315.10px;font-size:7.3px;line-height:7.3px;color:#1e2944;transform:scaleX(0.859);-webkit-text-stroke:0.12px #1e2944;">0.64</div>
<div class="t" style="left:339.00px;top:326.80px;font-size:6px;line-height:6px;color:#7c818c;transform:scaleX(0.858);">0-0.5</div>
<div class="t" style="left:365.00px;top:326.30px;font-size:7.3px;line-height:7.3px;color:#1e2944;transform:scaleX(0.859);-webkit-text-stroke:0.12px #1e2944;">1.35</div>
<div class="t" style="left:386.50px;top:315.60px;font-size:6px;line-height:6px;color:#7c818c;transform:scaleX(0.729);">O 2</div>
<div class="t" style="left:413.10px;top:315.10px;font-size:7.3px;line-height:7.3px;color:#1e2944;transform:scaleX(0.859);-webkit-text-stroke:0.12px #1e2944;">0.89</div>
<svg style="position:absolute;left:406.6px;top:317.3px" width="4" height="3" viewBox="0 0 4 3"><path d="M0 2.6L2 .6 4 2.6z" fill="#b9c2c4"/></svg>
<div class="t" style="left:386.50px;top:326.80px;font-size:6px;line-height:6px;color:#7c818c;">U</div>
<div class="t" style="left:413.10px;top:326.30px;font-size:7.3px;line-height:7.3px;color:#1e2944;transform:scaleX(0.859);-webkit-text-stroke:0.12px #1e2944;">0.99</div>
<svg style="position:absolute;left:406.6px;top:328.5px" width="4" height="3" viewBox="0 0 4 3"><path d="M0 .4L2 2.4 4 .4z" fill="#e6a394"/></svg>
<div class="t" style="left:482.30px;top:315.60px;font-size:6px;line-height:6px;color:#7c818c;transform:scaleX(0.858);">0-0.5</div>
<div class="t" style="left:508.30px;top:315.10px;font-size:7.3px;line-height:7.3px;color:#1e2944;transform:scaleX(0.859);-webkit-text-stroke:0.12px #1e2944;">1.72</div>
<div class="t" style="left:508.30px;top:326.30px;font-size:7.3px;line-height:7.3px;color:#1e2944;transform:scaleX(0.859);-webkit-text-stroke:0.12px #1e2944;">0.48</div>
<div class="t" style="left:529.80px;top:315.60px;font-size:6px;line-height:6px;color:#7c818c;transform:scaleX(0.800);">O 0.5</div>
<div class="t" style="left:556.10px;top:315.10px;font-size:7.3px;line-height:7.3px;color:#1e2944;transform:scaleX(0.859);-webkit-text-stroke:0.12px #1e2944;">0.69</div>
<div class="t" style="left:529.80px;top:326.80px;font-size:6px;line-height:6px;color:#7c818c;">U</div>
<div class="t" style="left:556.10px;top:326.30px;font-size:7.3px;line-height:7.3px;color:#1e2944;transform:scaleX(0.859);-webkit-text-stroke:0.12px #1e2944;">1.23</div>
<div class="t" style="left:339.00px;top:343.10px;font-size:6px;line-height:6px;color:#7c818c;transform:scaleX(0.858);">0-0.5</div>
<div class="t" style="left:365.00px;top:342.60px;font-size:7.3px;line-height:7.3px;color:#1e2944;transform:scaleX(0.859);-webkit-text-stroke:0.12px #1e2944;">1.22</div>
<div class="t" style="left:365.00px;top:353.80px;font-size:7.3px;line-height:7.3px;color:#1e2944;transform:scaleX(0.859);-webkit-text-stroke:0.12px #1e2944;">0.72</div>
<div class="t" style="left:386.50px;top:343.10px;font-size:6px;line-height:6px;color:#7c818c;transform:scaleX(0.822);">O 1.5-2</div>
<div class="t" style="left:413.10px;top:342.60px;font-size:7.3px;line-height:7.3px;color:#1e2944;transform:scaleX(0.859);-webkit-text-stroke:0.12px #1e2944;">0.62</div>
<svg style="position:absolute;left:406.6px;top:344.8px" width="4" height="3" viewBox="0 0 4 3"><path d="M0 2.6L2 .6 4 2.6z" fill="#b9c2c4"/></svg>
<div class="t" style="left:386.50px;top:354.30px;font-size:6px;line-height:6px;color:#7c818c;">U</div>
<div class="t" style="left:413.10px;top:353.80px;font-size:7.3px;line-height:7.3px;color:#1e2944;transform:scaleX(0.859);-webkit-text-stroke:0.12px #1e2944;">1.35</div>
<svg style="position:absolute;left:406.6px;top:356.0px" width="4" height="3" viewBox="0 0 4 3"><path d="M0 .4L2 2.4 4 .4z" fill="#e6a394"/></svg>
<div class="t" style="left:434.60px;top:287.55px;font-size:7px;line-height:7px;color:#7a808c;transform:scaleX(0.896);">1</div>
<div class="t" style="left:458.90px;top:287.30px;font-size:7.3px;line-height:7.3px;color:#1e2944;transform:scaleX(0.859);-webkit-text-stroke:0.12px #1e2944;">2.53</div>
<div class="t" style="left:434.60px;top:299.90px;font-size:7px;line-height:7px;color:#7a808c;transform:scaleX(0.896);">2</div>
<div class="t" style="left:458.90px;top:299.65px;font-size:7.3px;line-height:7.3px;color:#1e2944;transform:scaleX(0.859);-webkit-text-stroke:0.12px #1e2944;">2.75</div>
<svg style="position:absolute;left:454.3px;top:301.85px" width="4" height="3" viewBox="0 0 4 3"><path d="M0 2.6L2 .6 4 2.6z" fill="#b9c2c4"/></svg>
<div class="t" style="left:434.60px;top:312.25px;font-size:7px;line-height:7px;color:#7a808c;transform:scaleX(0.856);">X</div>
<div class="t" style="left:458.90px;top:312.00px;font-size:7.3px;line-height:7.3px;color:#1e2944;transform:scaleX(0.859);-webkit-text-stroke:0.12px #1e2944;">2.98</div>
<svg style="position:absolute;left:454.3px;top:314.2px" width="4" height="3" viewBox="0 0 4 3"><path d="M0 .4L2 2.4 4 .4z" fill="#e6a394"/></svg>
<div class="t" style="left:577.60px;top:287.55px;font-size:7px;line-height:7px;color:#7a808c;transform:scaleX(0.896);">1</div>
<div class="t" style="left:602.70px;top:287.30px;font-size:7.3px;line-height:7.3px;color:#1e2944;transform:scaleX(0.859);-webkit-text-stroke:0.12px #1e2944;">3.50</div>
<div class="t" style="left:577.60px;top:299.90px;font-size:7px;line-height:7px;color:#7a808c;transform:scaleX(0.896);">2</div>
<div class="t" style="left:602.70px;top:299.65px;font-size:7.3px;line-height:7.3px;color:#1e2944;transform:scaleX(0.859);-webkit-text-stroke:0.12px #1e2944;">3.90</div>
<svg style="position:absolute;left:596.2px;top:301.85px" width="4" height="3" viewBox="0 0 4 3"><path d="M0 .4L2 2.4 4 .4z" fill="#e6a394"/></svg>
<div class="t" style="left:577.60px;top:312.25px;font-size:7px;line-height:7px;color:#7a808c;transform:scaleX(0.856);">X</div>
<div class="t" style="left:602.70px;top:312.00px;font-size:7.3px;line-height:7.3px;color:#1e2944;transform:scaleX(0.859);-webkit-text-stroke:0.12px #1e2944;">1.78</div>
<div class="b" style="left:137px;top:364.4px;width:482.7px;height:1.3px;background:#ffffff;"></div>
<div class="b" style="left:137px;top:365.7px;width:482.7px;height:50px;background:#f7ebea;"></div>
<div class="b" style="left:137px;top:365.7px;width:25px;height:50px;background:#f5e5e4;"></div>
<div class="b" style="left:162px;top:365.7px;width:0.8px;height:50px;background:#f2eceb;"></div>
<div class="b" style="left:334px;top:365.7px;width:47.5px;height:27.3px;background:#f5e6e4;"></div>
<div class="b" style="left:334px;top:392.0px;width:47.5px;height:1px;background:#fdf9f8;"></div>
<div class="b" style="left:381.5px;top:365.7px;width:48.10000000000002px;height:27.3px;background:#f5e6e4;"></div>
<div class="b" style="left:381.5px;top:392.0px;width:48.10000000000002px;height:1px;background:#fdf9f8;"></div>
<div class="b" style="left:477.3px;top:365.7px;width:47.49999999999994px;height:27.3px;background:#f5e6e4;"></div>
<div class="b" style="left:477.3px;top:392.0px;width:47.49999999999994px;height:1px;background:#fdf9f8;"></div>
<div class="b" style="left:524.8px;top:365.7px;width:47.80000000000007px;height:27.3px;background:#f5e6e4;"></div>
<div class="b" style="left:524.8px;top:392.0px;width:47.80000000000007px;height:1px;background:#fdf9f8;"></div>
<div class="b" style="left:334px;top:393.0px;width:47.5px;height:28px;background:#f5e6e4;"></div>
<div class="b" style="left:334px;top:420.0px;width:47.5px;height:1px;background:#fdf9f8;"></div>
<div class="b" style="left:381.5px;top:393.0px;width:48.10000000000002px;height:28px;background:#f5e6e4;"></div>
<div class="b" style="left:381.5px;top:420.0px;width:48.10000000000002px;height:1px;background:#fdf9f8;"></div>
<div class="b" style="left:477.3px;top:393.0px;width:47.49999999999994px;height:28px;background:#f5e6e4;"></div>
<div class="b" style="left:477.3px;top:420.0px;width:47.49999999999994px;height:1px;background:#fdf9f8;"></div>
<div class="b" style="left:524.8px;top:393.0px;width:47.80000000000007px;height:28px;background:#f5e6e4;"></div>
<div class="b" style="left:524.8px;top:420.0px;width:47.80000000000007px;height:1px;background:#fdf9f8;"></div>
<div class="t" style="left:167.80px;top:372.45px;font-size:7.7px;line-height:7.7px;color:#b3101a;transform:scaleX(0.876);-webkit-text-stroke:0.2px currentColor;">SCU Torreense</div>
<div class="t" style="left:167.80px;top:382.65px;font-size:7.7px;line-height:7.7px;color:#232c46;transform:scaleX(0.847);-webkit-text-stroke:0.1px currentColor;">Chaves</div>
<div class="b" style="left:141.2px;top:368.5px;width:16.8px;height:8.5px;border:0.9px solid #d45a4c;box-sizing:border-box;"></div>
<div class="t" style="left:144.85px;top:370.44px;font-size:5.6px;line-height:5.6px;color:#c9432f;font-weight:700;transform:scaleX(0.764);">LIVE</div>
<div class="t" style="left:142.95px;top:381.50px;font-size:8px;line-height:8px;color:#c9482e;transform:scaleX(0.854);-webkit-text-stroke:0.35px #c9482e;">0 : 0</div>
<div class="t" style="left:141.80px;top:392.97px;font-size:5.8px;line-height:5.8px;color:#4e5566;transform:scaleX(0.977);">1H 12&#x27;</div>
<div class="t" style="left:339.00px;top:371.00px;font-size:6px;line-height:6px;color:#7c818c;transform:scaleX(0.858);">0-0.5</div>
<div class="t" style="left:365.00px;top:370.50px;font-size:7.3px;line-height:7.3px;color:#1e2944;transform:scaleX(0.859);-webkit-text-stroke:0.12px #1e2944;">1.13</div>
<div class="t" style="left:365.00px;top:381.69px;font-size:7.3px;line-height:7.3px;color:#1e2944;transform:scaleX(0.859);-webkit-text-stroke:0.12px #1e2944;">0.78</div>
<div class="t" style="left:386.50px;top:371.00px;font-size:6px;line-height:6px;color:#7c818c;transform:scaleX(0.822);">O 2-2.5</div>
<div class="t" style="left:413.10px;top:370.50px;font-size:7.3px;line-height:7.3px;color:#1e2944;transform:scaleX(0.859);-webkit-text-stroke:0.12px #1e2944;">1.26</div>
<div class="t" style="left:386.50px;top:382.20px;font-size:6px;line-height:6px;color:#7c818c;">U</div>
<div class="t" style="left:413.10px;top:381.69px;font-size:7.3px;line-height:7.3px;color:#1e2944;transform:scaleX(0.859);-webkit-text-stroke:0.12px #1e2944;">0.67</div>
<div class="t" style="left:482.30px;top:371.00px;font-size:6px;line-height:6px;color:#7c818c;">0</div>
<div class="t" style="left:508.30px;top:370.50px;font-size:7.3px;line-height:7.3px;color:#1e2944;transform:scaleX(0.859);-webkit-text-stroke:0.12px #1e2944;">0.89</div>
<div class="t" style="left:508.30px;top:381.69px;font-size:7.3px;line-height:7.3px;color:#1e2944;transform:scaleX(0.859);-webkit-text-stroke:0.12px #1e2944;">1.01</div>
<div class="t" style="left:529.80px;top:371.00px;font-size:6px;line-height:6px;color:#7c818c;transform:scaleX(0.822);">O 0.5-1</div>
<div class="t" style="left:556.10px;top:370.50px;font-size:7.3px;line-height:7.3px;color:#1e2944;transform:scaleX(0.892);-webkit-text-stroke:0.12px #1e2944;">1.11</div>
<svg style="position:absolute;left:549.6px;top:372.7px" width="4" height="3" viewBox="0 0 4 3"><path d="M0 2.6L2 .6 4 2.6z" fill="#b9c2c4"/></svg>
<div class="t" style="left:529.80px;top:382.20px;font-size:6px;line-height:6px;color:#7c818c;">U</div>
<div class="t" style="left:556.10px;top:381.69px;font-size:7.3px;line-height:7.3px;color:#1e2944;transform:scaleX(0.859);-webkit-text-stroke:0.12px #1e2944;">0.78</div>
<svg style="position:absolute;left:549.6px;top:383.9px" width="4" height="3" viewBox="0 0 4 3"><path d="M0 .4L2 2.4 4 .4z" fill="#e6a394"/></svg>
<div class="t" style="left:339.00px;top:398.30px;font-size:6px;line-height:6px;color:#7c818c;">0</div>
<div class="t" style="left:365.00px;top:397.80px;font-size:7.3px;line-height:7.3px;color:#1e2944;transform:scaleX(0.859);-webkit-text-stroke:0.12px #1e2944;">0.75</div>
<div class="t" style="left:386.50px;top:398.30px;font-size:6px;line-height:6px;color:#7c818c;transform:scaleX(0.729);">O 2</div>
<div class="t" style="left:413.10px;top:397.80px;font-size:7.3px;line-height:7.3px;color:#1e2944;transform:scaleX(0.859);-webkit-text-stroke:0.12px #1e2944;">0.98</div>
<div class="t" style="left:482.30px;top:398.30px;font-size:6px;line-height:6px;color:#7c818c;transform:scaleX(0.858);">0-0.5</div>
<div class="t" style="left:508.30px;top:397.80px;font-size:7.3px;line-height:7.3px;color:#1e2944;transform:scaleX(0.859);-webkit-text-stroke:0.12px #1e2944;">1.85</div>
<svg style="position:absolute;left:501.79999999999995px;top:400.0px" width="4" height="3" viewBox="0 0 4 3"><path d="M0 2.6L2 .6 4 2.6z" fill="#b9c2c4"/></svg>
<div class="t" style="left:529.80px;top:398.30px;font-size:6px;line-height:6px;color:#7c818c;transform:scaleX(0.800);">O 0.5</div>
<div class="t" style="left:556.10px;top:397.80px;font-size:7.3px;line-height:7.3px;color:#1e2944;transform:scaleX(0.859);-webkit-text-stroke:0.12px #1e2944;">0.76</div>
<svg style="position:absolute;left:549.6px;top:400.0px" width="4" height="3" viewBox="0 0 4 3"><path d="M0 2.6L2 .6 4 2.6z" fill="#b9c2c4"/></svg>
<div class="t" style="left:434.60px;top:371.25px;font-size:7px;line-height:7px;color:#7a808c;transform:scaleX(0.896);">1</div>
<div class="t" style="left:458.90px;top:371.00px;font-size:7.3px;line-height:7.3px;color:#1e2944;transform:scaleX(0.859);-webkit-text-stroke:0.12px #1e2944;">2.47</div>
<div class="t" style="left:434.60px;top:383.60px;font-size:7px;line-height:7px;color:#7a808c;transform:scaleX(0.896);">2</div>
<div class="t" style="left:458.90px;top:383.35px;font-size:7.3px;line-height:7.3px;color:#1e2944;transform:scaleX(0.859);-webkit-text-stroke:0.12px #1e2944;">2.82</div>
<div class="t" style="left:434.60px;top:395.95px;font-size:7px;line-height:7px;color:#7a808c;transform:scaleX(0.856);">X</div>
<div class="t" style="left:458.90px;top:395.69px;font-size:7.3px;line-height:7.3px;color:#1e2944;transform:scaleX(0.859);-webkit-text-stroke:0.12px #1e2944;">2.94</div>
<div class="t" style="left:577.60px;top:371.25px;font-size:7px;line-height:7px;color:#7a808c;transform:scaleX(0.896);">1</div>
<div class="t" style="left:602.70px;top:371.00px;font-size:7.3px;line-height:7.3px;color:#1e2944;transform:scaleX(0.859);-webkit-text-stroke:0.12px #1e2944;">3.56</div>
<svg style="position:absolute;left:596.2px;top:373.2px" width="4" height="3" viewBox="0 0 4 3"><path d="M0 2.6L2 .6 4 2.6z" fill="#b9c2c4"/></svg>
<div class="t" style="left:577.60px;top:383.60px;font-size:7px;line-height:7px;color:#7a808c;transform:scaleX(0.896);">2</div>
<div class="t" style="left:602.70px;top:383.35px;font-size:7.3px;line-height:7.3px;color:#1e2944;transform:scaleX(0.859);-webkit-text-stroke:0.12px #1e2944;">3.75</div>
<svg style="position:absolute;left:596.2px;top:385.55px" width="4" height="3" viewBox="0 0 4 3"><path d="M0 2.6L2 .6 4 2.6z" fill="#b9c2c4"/></svg>
<div class="t" style="left:577.60px;top:395.95px;font-size:7px;line-height:7px;color:#7a808c;transform:scaleX(0.856);">X</div>
<div class="t" style="left:602.70px;top:395.69px;font-size:7.3px;line-height:7.3px;color:#1e2944;transform:scaleX(0.859);-webkit-text-stroke:0.12px #1e2944;">1.81</div>
<svg style="position:absolute;left:596.2px;top:397.9px" width="4" height="3" viewBox="0 0 4 3"><path d="M0 .4L2 2.4 4 .4z" fill="#e6a394"/></svg>
<div class="b" style="left:572.4px;top:156px;width:0.9px;height:111px;background:#ffffff;"></div>
<div class="b" style="left:572.4px;top:282px;width:0.9px;height:128px;background:#ffffff;"></div>
<div class="b" style="left:334px;top:124.4px;width:48px;height:282.4px;border:2px solid #e3141b;box-sizing:border-box;"></div>
<div class="b" style="left:477.3px;top:124.4px;width:48px;height:282.4px;border:2px solid #e3141b;box-sizing:border-box;"></div>
<div class="b" style="left:630px;top:98.7px;width:146.3px;height:21.8px;background:#1c2131;"></div>
<div class="t" style="left:705.50px;top:106.54px;font-size:7.6px;line-height:7.6px;color:#ffffff;transform:scaleX(0.834);">Về Giao Diện Cũ</div>
<div class="b" style="left:757.5px;top:105.5px;width:15px;height:8.8px;background:#3aa56b;border-radius:4.4px;"></div>
<div class="b" style="left:765.3px;top:106.3px;width:7.2px;height:7.2px;background:#ffffff;border-radius:3.6px;"></div>
<svg style="position:absolute;left:630px;top:126.2px" width="146.3" height="55" viewBox="0 0 146.3 55">
<defs>
<linearGradient id="bgR" x1="0" y1="0" x2="1" y2="1"><stop offset="0" stop-color="#5a0e17"/><stop offset="1" stop-color="#7a1620"/></linearGradient>
<radialGradient id="gold" cx=".5" cy=".35" r=".7"><stop offset="0" stop-color="#e9c763"/><stop offset=".6" stop-color="#b98c2e"/><stop offset="1" stop-color="#6a4a12"/></radialGradient>
<linearGradient id="ysh" x1="0" y1="0" x2="1" y2="1"><stop offset="0" stop-color="#f3e03c"/><stop offset="1" stop-color="#dcbc18"/></linearGradient>
<linearGradient id="dk" x1="0" y1="0" x2="1" y2="1"><stop offset="0" stop-color="#1a1d25"/><stop offset="1" stop-color="#20232b"/></linearGradient>
</defs>
<rect width="146.3" height="55" fill="url(#dk)"/>
<path d="M96 0h8L86 55h-8zM120 0h3l-14 55h-3z" fill="#262a33" opacity=".7"/>
<path d="M0 0H74L30 55H0z" fill="url(#bgR)"/>
<g stroke="#8a1f2c" stroke-width="1.8" fill="none" opacity=".75">
<path d="M4 3l5 5M15 2v8M24 4l5-3M38 3l5 6M52 4h7M61 9l6-5M3 15c4-2 8-2 10 2M29 17l4-4M58 16l4 3M8 26l6 2M4 36h6"/>
</g>
<path d="M4 28c0-4.5 3.2-6.8 6.5-6.8S17 23.5 17 28c0 4.2-2.2 7.2-4.2 9.2l-.4 8h2v4h1.4V55H4.6v-5.8H6v-4h2l-.4-8C5.6 35.2 4 32.2 4 28z" fill="url(#gold)"/>
<path d="M15 26c2-5 5.5-6.5 10-6.5s8 1.5 10 6.5l2.5 29H13.5z" fill="#e8ecf2"/>
<path d="M20.5 21.5l1.5 33.5h3l-.8-33.5zM28 21.5l.8 33.5h3l-1.6-33.5z" fill="#9cc0e6"/>
<ellipse cx="25" cy="13.2" rx="5.2" ry="6.6" fill="#c99b80"/>
<path d="M19.6 12c.2-4 2.5-6 5.4-6 3 0 5.4 2 5.6 5.8-1.4-1.3-3.2-2-5.6-2s-4 .8-5.4 2.2z" fill="#3b2a1e"/>
<path d="M21 16c.8 3 2 4.8 4 4.8s3.2-1.8 4-4.8c-1 1.4-2.4 2-4 2s-3-.6-4-2z" fill="#5a4030"/>
<path d="M26 31c3-7 9-9.5 21-9.5s17.5 2.5 20.5 9l2.5 8.5-6.5 2.5L63 55H34l-.5-14-6.5-2z" fill="url(#ysh)"/>
<path d="M41.5 21.8c2 3.2 10 3.2 12 0" stroke="#1c8a4c" stroke-width="2" fill="none"/>
<path d="M26.5 38.5l6.5 2.2M63.5 41.5l6.3-2.5" stroke="#1c8a4c" stroke-width="1.3"/>
<text x="41" y="43" font-family="Liberation Sans" font-size="7.5" font-weight="700" fill="#1c8a4c">10</text>
<path d="M55 30h4v4.5l-2 1.2-2-1.2z" fill="#2a6ac0"/>
<ellipse cx="47.5" cy="12.8" rx="5.6" ry="7.4" fill="#8a5a3c"/>
<rect x="44.5" y="17.5" width="6" height="5" fill="#7a4c30"/>
<path d="M41.8 10.5c.2-4.6 2.4-6.9 5.7-6.9 3.4 0 5.6 2.2 5.8 6.7-1.6-1.2-3.5-1.9-5.8-1.9s-4.1.8-5.7 2.1z" fill="#ebe4d2"/>
<path d="M63.5 41l6.5-1.5 2 9.5-6 6h-7l-1-4 5.5-1z" fill="#8a5a3c"/>
<path d="M59.5 48l5.2 2.2-1.2 2.8-5.2-2.2z" fill="#ffffff"/>
</svg>
<div class="t" style="left:705.50px;top:141.84px;font-size:9.6px;line-height:9.6px;color:#ffffff;font-weight:700;transform:scaleX(0.917);">World Cup 2022</div>
<div class="b" style="left:705.8px;top:153.3px;width:49.3px;height:11px;background:#f5c400;"></div>
<div class="t" style="left:713.90px;top:156.30px;font-size:6px;line-height:6px;color:#1b1f2b;font-weight:700;transform:scaleX(0.887);">CƯỢC NGAY</div>
<div class="b" style="left:630.2px;top:186.4px;width:146.1px;height:22px;background:#232e48;"></div>
<svg style="position:absolute;left:636.5px;top:195.5px" width="6" height="4" viewBox="0 0 6 4"><path d="M.6 3.4L3 1 5.4 3.4" stroke="#ffffff" stroke-width="1" fill="none"/></svg>
<div class="t" style="left:644.50px;top:194.23px;font-size:8.2px;line-height:8.2px;color:#ffffff;transform:scaleX(0.831);-webkit-text-stroke:0.2px currentColor;">Xem</div>
<div class="t" style="left:750.00px;top:193.99px;font-size:6.6px;line-height:6.6px;color:#ffffff;transform:scaleX(0.823);-webkit-text-stroke:0.25px currentColor;">Tất Cả</div>
<div class="b" style="left:750px;top:200.3px;width:16.3px;height:0.6px;background:#ffffff;"></div>
<div class="b" style="left:630.2px;top:208.4px;width:146.1px;height:105px;background:#f3f3f3;"></div>
<div class="t" style="left:663.05px;top:234.97px;font-size:7.8px;line-height:7.8px;color:#454a58;transform:scaleX(0.889);-webkit-text-stroke:0.3px currentColor;">Đăng Nhập hoặc Đăng Ký</div>
<div class="t" style="left:654.85px;top:245.62px;font-size:7.5px;line-height:7.5px;color:#7c808b;transform:scaleX(0.934);-webkit-text-stroke:0.1px currentColor;">Yêu cầu để mở phát trực tuyến</div>
<div class="b" style="left:653.9px;top:260px;width:45.7px;height:17.5px;background:#ffffff;border:0.9px solid #5a6070;box-sizing:border-box;"></div>
<div class="t" style="left:662.00px;top:264.82px;font-size:6.8px;line-height:6.8px;color:#2a3040;transform:scaleX(0.858);-webkit-text-stroke:0.3px currentColor;">Đăng Nhập</div>
<div class="b" style="left:707.2px;top:260px;width:45.1px;height:17.5px;background:#f8c800;"></div>
<div class="t" style="left:719.25px;top:264.82px;font-size:6.8px;line-height:6.8px;color:#2a2a2a;transform:scaleX(0.842);-webkit-text-stroke:0.3px currentColor;">Đăng ký</div>
</body></html>
